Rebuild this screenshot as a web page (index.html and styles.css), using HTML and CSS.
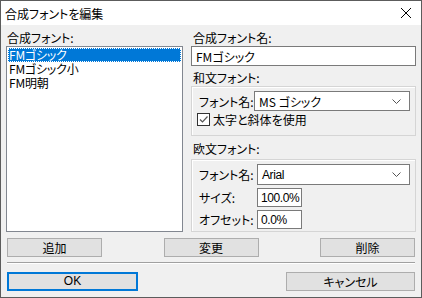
FILE: index.html
```html
<!DOCTYPE html>
<html lang="ja">
<head>
    <meta charset="UTF-8">
    <title>合成フォントを編集</title>
    <link rel="stylesheet" href="styles.css">
</head>
<body>

<div class="window">
    <div class="titlebar">
        <span class="title">合成フォントを編集</span>
        <svg class="close" width="12" height="12" viewBox="0 0 12 12">
            <path d="M1 1 L11 11 M11 1 L1 11" stroke="#000" stroke-width="1" fill="none"/>
        </svg>
    </div>

    <div class="content">
        <div class="main">
            <div class="left">
                <div class="label">合成フォント:</div>
                <ul class="listbox">
                    <li class="selected">FMゴシック</li>
                    <li>FMゴシック小</li>
                    <li>FM明朝</li>
                </ul>
            </div>

            <div class="right">
                <div class="label">合成フォント名:</div>
                <div class="textbox wide">FMゴシック</div>

                <div class="label group-label">和文フォント:</div>
                <div class="group group-ja">
                    <div class="row">
                        <span class="field-name">フォント名:</span>
                        <div class="combo combo-ja">
                            <span>MS ゴシック</span>
                            <svg class="arrow" width="9" height="5" viewBox="0 0 9 5"><path d="M0.5 0.5 L4.5 4.5 L8.5 0.5" stroke="#555" fill="none"/></svg>
                        </div>
                    </div>
                    <div class="check-row">
                        <span class="checkbox">
                            <svg width="11" height="11" viewBox="0 0 11 11"><path d="M2 5.5 L4.5 8 L9.5 2.5" stroke="#555" stroke-width="1.2" fill="none"/></svg>
                        </span>
                        <span>太字と斜体を使用</span>
                    </div>
                </div>

                <div class="label group-label latin-label">欧文フォント:</div>
                <div class="group group-latin">
                    <div class="row">
                        <span class="field-name">フォント名:</span>
                        <div class="combo combo-latin">
                            <span class="latin">Arial</span>
                            <svg class="arrow" width="9" height="5" viewBox="0 0 9 5"><path d="M0.5 0.5 L4.5 4.5 L8.5 0.5" stroke="#555" fill="none"/></svg>
                        </div>
                    </div>
                    <div class="row small-row">
                        <span class="field-name">サイズ:</span>
                        <div class="textbox small latin">100.0%</div>
                    </div>
                    <div class="row small-row">
                        <span class="field-name">オフセット:</span>
                        <div class="textbox small latin">0.0%</div>
                    </div>
                </div>
            </div>
        </div>

        <div class="button-row">
            <button>追加</button>
            <button>変更</button>
            <button>削除</button>
        </div>

        <div class="separator"></div>

        <div class="dialog-buttons">
            <button class="ok">OK</button>
            <button class="cancel">キャンセル</button>
        </div>
    </div>
</div>

</body>
</html>
```

FILE: styles.css
```css
body {
    margin: 0;
    padding: 0;
    font-family: "Noto Sans CJK JP", "Noto Sans", sans-serif;
    font-size: 12px;
    font-feature-settings: "palt";
    color: #000;
}
.window {
    width: 422px;
    height: 298px;
    box-sizing: border-box;
    border: 1px solid #5c5c5c;
    background-color: #f0f0f0;
    display: flex;
    flex-direction: column;
}
.titlebar {
    height: 24px;
    background-color: #fff;
    display: flex;
    align-items: center;
    justify-content: space-between;
    padding: 0 9px 0 4px;
}
.title {
    font-size: 12px;
}
.close {
    display: block;
}
.content {
    padding: 4px 5px 0 5px;
}
.main {
    display: grid;
    grid-template-columns: 177px 225px;
    column-gap: 8px;
    align-items: start;
}
.label {
    height: 17px;
    line-height: 17px;
}
.left .label {
    padding-left: 1px;
}
.listbox {
    list-style: none;
    margin: 0;
    padding: 1px;
    height: 186px;
    box-sizing: border-box;
    border: 1px solid #828790;
    background-color: #fff;
}
.listbox li {
    height: 14px;
    line-height: 14px;
    padding-left: 1px;
    letter-spacing: -0.2px;
}
.listbox li.selected {
    background-color: #0078d7;
    color: #fff;
    outline: 1px dotted #fff;
    outline-offset: -1px;
}
.right .label {
    padding-left: 2px;
}
.textbox {
    box-sizing: border-box;
    border: 1px solid #7a7a7a;
    background-color: #fff;
    padding-left: 4px;
    display: flex;
    align-items: center;
}
.textbox.wide {
    height: 20px;
}
.group-label {
    margin-top: 3px;
}
.latin-label {
    margin-top: 4px;
    margin-bottom: 2px;
}
.group {
    border: 1px solid #d5d5d5;
    box-shadow: inset 1px 1px 0 #fff;
    padding: 4px 5px 0 7px;
}
.group-ja {
    height: 44px;
    box-sizing: content-box;
    padding-top: 4px;
    padding-bottom: 0;
}
.group-latin {
    padding-bottom: 2px;
}
.row {
    display: flex;
    align-items: center;
}
.field-name {
    width: 58px;
    flex: none;
}
.combo {
    flex: 1;
    box-sizing: border-box;
    border: 1px solid #7a7a7a;
    background-color: #fff;
    display: flex;
    align-items: center;
    justify-content: space-between;
    padding: 0 8px 0 4px;
}
.combo-ja {
    height: 20px;
    margin-left: -3px;
}
.combo-latin {
    height: 21px;
}
.latin {
    font-family: "Liberation Sans", Arial, sans-serif;
    letter-spacing: -0.4px;
}
.small-row {
    margin-top: 3px;
}
.textbox.small {
    width: 45px;
    height: 19px;
    padding-left: 3px;
}
.check-row {
    display: flex;
    align-items: center;
    height: 17px;
    margin-left: -2px;
}
.checkbox {
    width: 13px;
    height: 13px;
    box-sizing: border-box;
    border: 1px solid #333;
    background-color: #fff;
    margin-right: 3px;
    display: flex;
    align-items: center;
    justify-content: center;
}
.checkbox svg {
    display: block;
}
button {
    font-family: "Noto Sans CJK JP", "Noto Sans", sans-serif;
    font-size: 12px;
    font-feature-settings: "palt";
    height: 19px;
    padding: 0;
    background-color: #e1e1e1;
    border: 1px solid #adadad;
    color: #000;
    line-height: 15px;
}
.button-row {
    display: flex;
    justify-content: space-between;
    margin-top: 6px;
    padding: 0 1px;
}
.button-row button {
    width: 95px;
}
.separator {
    margin: 5px 1px 0 1px;
    height: 1px;
    background-color: #a0a0a0;
    border-bottom: 1px solid #fff;
}
.dialog-buttons {
    display: flex;
    justify-content: space-between;
    margin-top: 8px;
    padding: 0 1px;
}
.ok {
    width: 131px;
    border: 2px solid #0078d7;
    font-family: "Liberation Sans", Arial, sans-serif;
}
.cancel {
    width: 129px;
}
```
